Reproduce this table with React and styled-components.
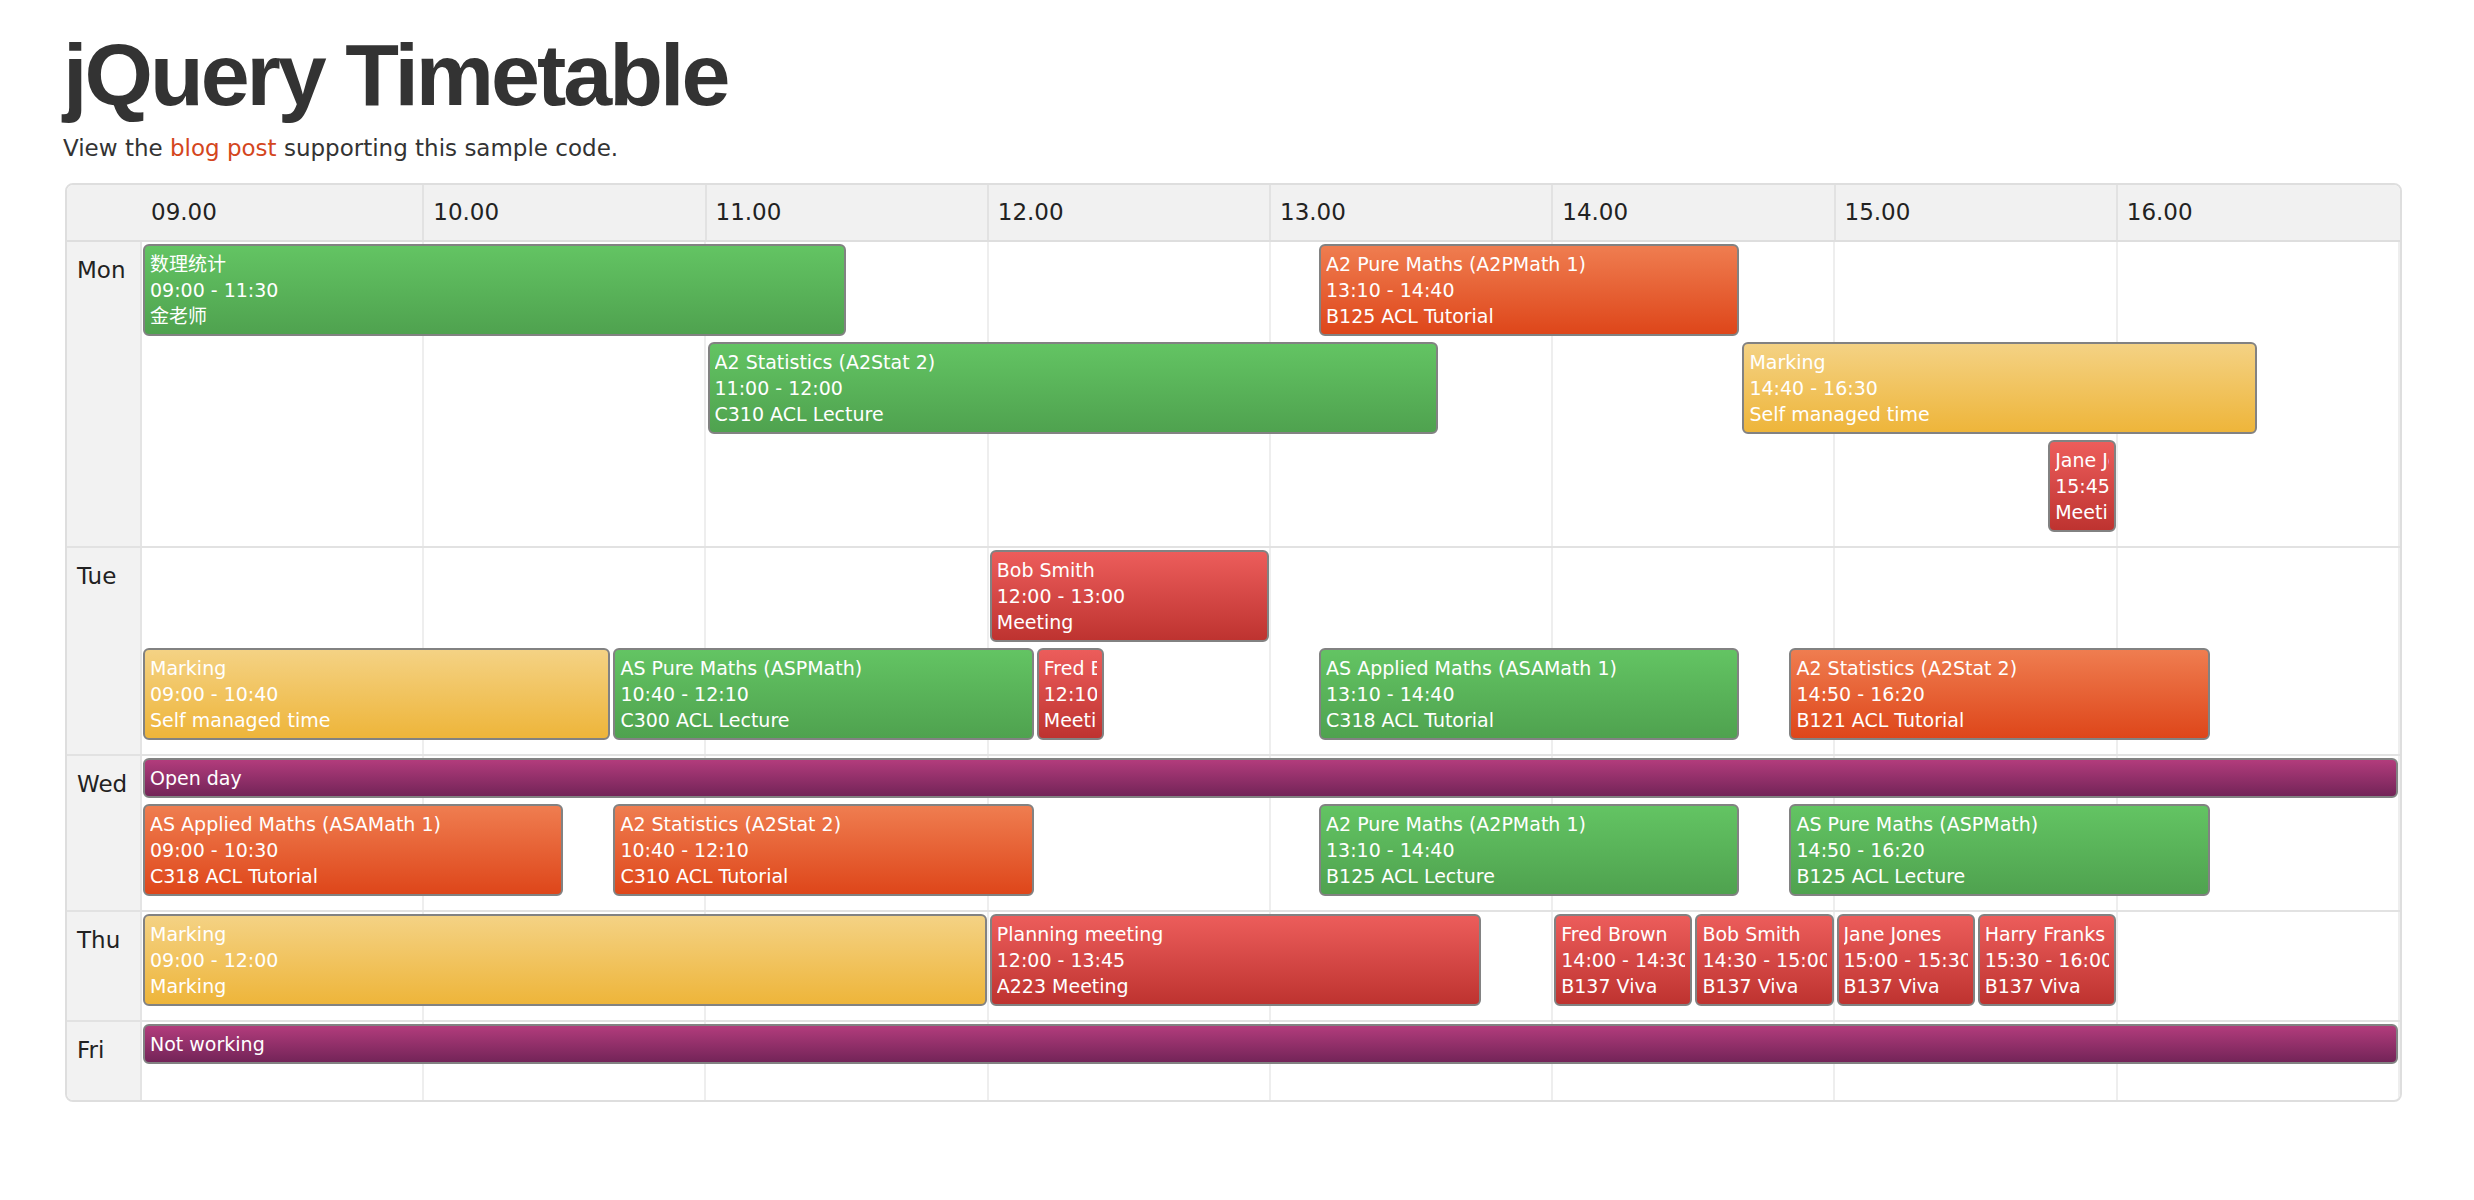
import React from "react";
import styled, { createGlobalStyle } from "styled-components";

const GlobalStyle = createGlobalStyle`
  html, body {
    margin: 0;
    padding: 0;
    background: #fff;
  }
  body {
    font-family: "DejaVu Sans", "Noto Sans CJK SC", sans-serif;
    color: #333;
  }
`;

const START = 9;
const END = 17;
const SPAN = END - START;

const COLORS = {
  green: ["#63c463", "#4fa24f"],
  orange: ["#ef7d50", "#de461a"],
  red: ["#ec5d5b", "#be3330"],
  yellow: ["#f4d284", "#eeb53a"],
  purple: ["#b23c7c", "#732458"],
};

const days = [
  {
    name: "Mon",
    lanes: [
      {
        items: [
          { from: 9, to: 11.5, color: "green", lines: ["数理统计", "09:00 - 11:30", "金老师"] },
          { from: 13 + 1 / 6, to: 14 + 2 / 3, color: "orange", lines: ["A2 Pure Maths (A2PMath 1)", "13:10 - 14:40", "B125 ACL Tutorial"] },
        ],
      },
      {
        items: [
          { from: 11, to: 13.6, color: "green", lines: ["A2 Statistics (A2Stat 2)", "11:00 - 12:00", "C310 ACL Lecture"] },
          { from: 14 + 2 / 3, to: 16.5, color: "yellow", lines: ["Marking", "14:40 - 16:30", "Self managed time"] },
        ],
      },
      {
        items: [
          { from: 15.75, to: 16, color: "red", lines: ["Jane Jones", "15:45 - 16:00", "Meeting"] },
        ],
      },
    ],
  },
  {
    name: "Tue",
    lanes: [
      {
        items: [
          { from: 12, to: 13, color: "red", lines: ["Bob Smith", "12:00 - 13:00", "Meeting"] },
        ],
      },
      {
        items: [
          { from: 9, to: 10 + 2 / 3, color: "yellow", lines: ["Marking", "09:00 - 10:40", "Self managed time"] },
          { from: 10 + 2 / 3, to: 12 + 1 / 6, color: "green", lines: ["AS Pure Maths (ASPMath)", "10:40 - 12:10", "C300 ACL Lecture"] },
          { from: 12 + 1 / 6, to: 12 + 5 / 12, color: "red", lines: ["Fred Brown", "12:10 - 12:25", "Meeting"] },
          { from: 13 + 1 / 6, to: 14 + 2 / 3, color: "green", lines: ["AS Applied Maths (ASAMath 1)", "13:10 - 14:40", "C318 ACL Tutorial"] },
          { from: 14 + 5 / 6, to: 16 + 1 / 3, color: "orange", lines: ["A2 Statistics (A2Stat 2)", "14:50 - 16:20", "B121 ACL Tutorial"] },
        ],
      },
    ],
  },
  {
    name: "Wed",
    lanes: [
      {
        short: true,
        items: [{ from: 9, to: 17, color: "purple", lines: ["Open day"] }],
      },
      {
        items: [
          { from: 9, to: 10.5, color: "orange", lines: ["AS Applied Maths (ASAMath 1)", "09:00 - 10:30", "C318 ACL Tutorial"] },
          { from: 10 + 2 / 3, to: 12 + 1 / 6, color: "orange", lines: ["A2 Statistics (A2Stat 2)", "10:40 - 12:10", "C310 ACL Tutorial"] },
          { from: 13 + 1 / 6, to: 14 + 2 / 3, color: "green", lines: ["A2 Pure Maths (A2PMath 1)", "13:10 - 14:40", "B125 ACL Lecture"] },
          { from: 14 + 5 / 6, to: 16 + 1 / 3, color: "green", lines: ["AS Pure Maths (ASPMath)", "14:50 - 16:20", "B125 ACL Lecture"] },
        ],
      },
    ],
  },
  {
    name: "Thu",
    lanes: [
      {
        items: [
          { from: 9, to: 12, color: "yellow", lines: ["Marking", "09:00 - 12:00", "Marking"] },
          { from: 12, to: 13.75, color: "red", lines: ["Planning meeting", "12:00 - 13:45", "A223 Meeting"] },
          { from: 14, to: 14.5, color: "red", lines: ["Fred Brown", "14:00 - 14:30", "B137 Viva"] },
          { from: 14.5, to: 15, color: "red", lines: ["Bob Smith", "14:30 - 15:00", "B137 Viva"] },
          { from: 15, to: 15.5, color: "red", lines: ["Jane Jones", "15:00 - 15:30", "B137 Viva"] },
          { from: 15.5, to: 16, color: "red", lines: ["Harry Franks", "15:30 - 16:00", "B137 Viva"] },
        ],
      },
    ],
  },
  {
    name: "Fri",
    lanes: [
      {
        short: true,
        items: [{ from: 9, to: 17, color: "purple", lines: ["Not working"] }],
      },
    ],
  },
];

const hours = ["09.00", "10.00", "11.00", "12.00", "13.00", "14.00", "15.00", "16.00"];

const Page = styled.div`
  padding: 27px 0 60px 63px;
`;

const Title = styled.h1`
  margin: 0;
  font-family: "Liberation Sans", Arial, sans-serif;
  font-weight: bold;
  font-size: 88px;
  line-height: 1.1;
  letter-spacing: -3px;
  color: #333;
`;

const Intro = styled.p`
  margin: 9px 0 0;
  font-size: 23px;
  line-height: 30px;
  color: #333;

  a {
    color: #d4461d;
    text-decoration: none;
  }
`;

const Table = styled.div`
  margin: 20px 0 0 2px;
  width: 2337px;
  box-sizing: border-box;
  border: 2px solid #dedede;
  border-radius: 8px;
  overflow: hidden;
`;

const HeadRow = styled.div`
  display: grid;
  grid-template-columns: 75px 1fr;
  height: 55px;
  background: #f1f1f1;
  border-bottom: 2px solid #dedede;
`;

const HourGrid = styled.div`
  display: grid;
  grid-template-columns: repeat(${SPAN}, 1fr);
`;

const HourCell = styled.div`
  display: flex;
  align-items: center;
  padding-left: 9px;
  font-size: 23px;
  color: #222;
  border-right: 2px solid ${(p) => (p.$last ? "transparent" : "#e2e2e2")};
`;

const DayRow = styled.div`
  display: grid;
  grid-template-columns: 75px 1fr;
  min-height: 78px;
  border-top: ${(p) => (p.$first ? "none" : "2px solid #e2e2e2")};
`;

const DayLabel = styled.div`
  background: #f2f2f2;
  border-right: 2px solid #e4e4e4;
  padding: 14px 0 0 10px;
  font-size: 23px;
  line-height: 28px;
  color: #222;
`;

const Lanes = styled.div`
  padding: 2px 0 8px;
  background-image: repeating-linear-gradient(
    90deg,
    transparent 0,
    transparent calc(100% / ${SPAN} - 2px),
    #eeeeee calc(100% / ${SPAN} - 2px),
    #eeeeee calc(100% / ${SPAN})
  );
`;

const Lane = styled.div`
  position: relative;
  height: ${(p) => (p.$short ? 46 : 98)}px;
`;

const Entry = styled.div`
  position: absolute;
  top: 0;
  height: ${(p) => (p.$short ? 40 : 92)}px;
  box-sizing: border-box;
  padding: 5px 5px 0 5px;
  border: 2px solid #828282;
  border-radius: 6px;
  background: linear-gradient(${(p) => COLORS[p.$color][0]}, ${(p) => COLORS[p.$color][1]});
  color: #fff;
  font-size: 19px;
  line-height: 26px;
  white-space: nowrap;
  overflow: hidden;
`;

const EntryLine = styled.div`
  overflow: hidden;
`;

function pct(h) {
  return ((h - START) / SPAN) * 100;
}

export default function App() {
  return (
    <Page>
      <GlobalStyle />
      <Title>jQuery Timetable</Title>
      <Intro>
        View the <a href="#">blog post</a> supporting this sample code.
      </Intro>
      <Table>
        <HeadRow>
          <div />
          <HourGrid>
            {hours.map((h, i) => (
              <HourCell key={h} $last={i === hours.length - 1}>
                {h}
              </HourCell>
            ))}
          </HourGrid>
        </HeadRow>
        {days.map((day, di) => (
          <DayRow key={day.name} $first={di === 0}>
            <DayLabel>{day.name}</DayLabel>
            <Lanes>
              {day.lanes.map((lane, li) => (
                <Lane key={li} $short={lane.short}>
                  {lane.items.map((ev, ei) => (
                    <Entry
                      key={ei}
                      $color={ev.color}
                      $short={lane.short}
                      style={{
                        left: `calc(${pct(ev.from)}% + 1px)`,
                        width: `calc(${pct(ev.to) - pct(ev.from)}% - 3px)`,
                      }}
                    >
                      {ev.lines.map((l, k) => (
                        <EntryLine key={k}>{l}</EntryLine>
                      ))}
                    </Entry>
                  ))}
                </Lane>
              ))}
            </Lanes>
          </DayRow>
        ))}
      </Table>
    </Page>
  );
}
